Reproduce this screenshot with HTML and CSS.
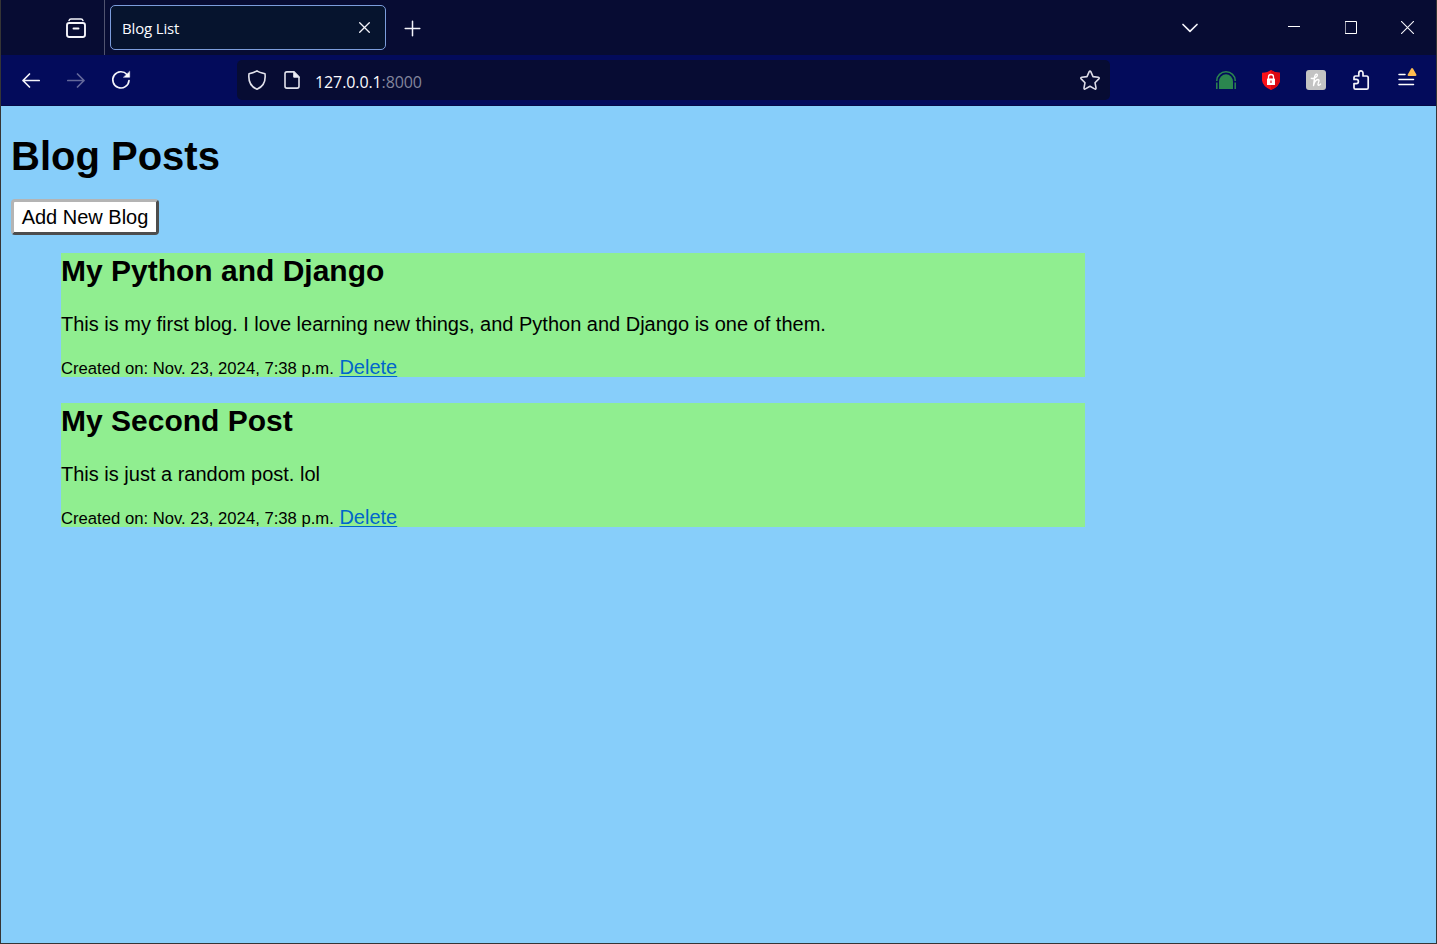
FILE: index.html
```html
<!DOCTYPE html>
<html lang="en">
<head>
<meta charset="utf-8">
<title>Blog List</title>
<link rel="stylesheet" href="styles.css">
</head>
<body>
<div class="window">
  <header class="tabs">
    <svg class="archive line" width="22" height="22" viewBox="0 0 22 22" stroke-width="1.900"><path d="M4 3.600Q4.500 2 6 2H16Q17.500 2 18 3.600" stroke-width="1.500"/><rect x="2" y="6" width="18" height="14" rx="2.200"/><path d="M8.500 11.500H13.500"/></svg>
    <span class="divider"></span>
    <div class="tab">
      <span class="tab-title">Blog List</span>
      <svg class="line" width="11" height="11" viewBox="0 0 11 11" stroke-width="1.300"><path d="M.7.7 10.300 10.300M10.300.7.7 10.300"/></svg>
    </div>
    <svg class="new-tab line" width="17" height="17" viewBox="0 0 17 17" stroke-width="1.500"><path d="M8.500 1.200V15.800M1.200 8.500H15.800"/></svg>
    <svg class="chevron line" width="18" height="10" viewBox="0 0 18 10" stroke-width="1.700"><path d="M2 1.500 9 8.300 16 1.500"/></svg>
    <svg class="minimize" width="12" height="1" viewBox="0 0 12 1"><path fill="#fff" d="M0 0H12V1H0z"/></svg>
    <svg class="maximize line" width="12" height="13" viewBox="0 0 12 13" stroke-width="1"><path d="M.5.5H11.500V12.500H.5z"/></svg>
    <svg class="close line" width="13" height="13" viewBox="0 0 13 13" stroke-width="1.100"><path d="M.4.4 12.600 12.600M12.600.4.4 12.600"/></svg>
  </header>
  <nav class="toolbar">
    <svg class="back line" width="20" height="18" viewBox="0 0 20 18" stroke-width="1.700"><path d="M18.200 9.500H2M8.500 3 2 9.500 8.500 16"/></svg>
    <svg class="forward line" width="20" height="18" viewBox="0 0 20 18" stroke-width="1.700"><path d="M1.800 9.500H18M11.500 3 18 9.500 11.500 16"/></svg>
    <svg class="reload line" width="20" height="20" viewBox="0 0 20 20" stroke-width="1.700"><path d="M18 10.500A8.100 8.100 0 1 1 16 4.500"/><path d="M18.700 1.500V7.300H12.700z" fill="#fff" stroke-width=".5"/></svg>
    <div class="address">
      <svg class="shield line" width="20" height="22" viewBox="0 0 20 22" stroke-width="1.600"><path d="M10 1.800Q12 3.200 18 4.800C18.800 11.500 16.500 17.500 10 20.200 3.500 17.500 1.200 11.500 2 4.800Q8 3.200 10 1.800z"/></svg>
      <svg class="page line" width="18" height="20" viewBox="0 0 18 20" stroke-width="1.600"><path d="M11 1.900H3.800Q2 1.900 2 3.700V16.300Q2 18.100 3.800 18.100H14.200Q16 18.100 16 16.300V7z"/><path d="M10.700 2V7.200H16z" fill="#f0f0f8" stroke-width="1"/></svg>
      <span class="url">127.0.0.1<span class="port">:8000</span></span>
      <svg class="star line" width="22" height="22" viewBox="0 0 22 22" stroke-width="1.600"><path d="M10.200 2.700Q11 1.400 11.800 2.700L14 7.600 19.300 8.300Q20.900 8.700 19.800 9.900L16 13.700 17 18.900Q17 20.600 15.600 19.900L11 17.300 6.400 19.900Q5 20.600 5 18.900L6 13.700 2.200 9.900Q1.100 8.700 2.700 8.300L8 7.600z"/></svg>
    </div>
    <svg class="arch" width="20" height="18" viewBox="0 0 20 18"><path d="M.8 10V9.500A9.200 8.700 0 0 1 19.200 9.500V10M.8 11.500V18M19.200 11.500V18" fill="none" stroke="#2b864f" stroke-width="1.500"/><path d="M3 18V10.500A7 7.200 0 0 1 17 10.500V18z" fill="#2b864f"/></svg>
    <svg class="blocker" width="18" height="20" viewBox="0 0 18 20"><path d="M9 0Q12 2.500 18 2.700V10.500Q17.200 16.500 9 20 .8 16.500 0 10.500V2.700Q6 2.500 9 0z" fill="#fa1018"/><path d="M9 0Q12 2.500 18 2.700V10.500Q17.200 16.500 9 20z" fill="#dc0710"/><rect x="5" y="8.500" width="8" height="6.500" rx=".6" fill="#fff"/><path d="M6.500 9V7a2.500 2.500 0 0 1 5 0V9" fill="none" stroke="#fff" stroke-width="1.300"/><path d="M9 10.500V13" stroke="#e3343c" stroke-width="1.300"/></svg>
    <svg class="honey" width="20" height="20" viewBox="0 0 20 20"><rect width="20" height="20" rx="3" fill="#c3c3c3"/><path d="M5.300 8.300C8 9 11.500 7 11.400 5 11.200 3.400 9.300 4 8.700 6.300L7.500 15.500C8.300 12 10 9.600 12 9.500 14.500 9.600 11.600 13.200 12 14.800 12.400 15.800 13.800 15.200 14.600 14" fill="none" stroke="#fff" stroke-width="1.350" stroke-linecap="round" stroke-linejoin="round"/></svg>
    <svg class="puzzle line" width="18" height="22" viewBox="0 0 18 22" stroke-width="1.700"><path d="M2 9.500V8.500Q2 7 3.500 7H6.800V4.200a2.100 2.400 0 0 1 4.200 0V7H14.500Q16.200 7 16.200 8.700V18.700Q16.200 20.200 14.700 20.200H3.500Q2 20.200 2 18.700V14.600H4.300a2.100 2.100 0 0 0 0-4.200H2z"/></svg>
    <svg class="menu" width="20" height="20" viewBox="0 0 20 20"><path d="M1 7.500H7M1 12.500H15.500M1 17.500H15.500" stroke="#fff" stroke-width="1.500" stroke-linecap="round"/><path d="M14.100 2 17.500 8H10.600z" fill="#ffbd4f" stroke="#ffbd4f" stroke-width="2" stroke-linejoin="round"/></svg>
  </nav>
  <main class="content">
    <h1>Blog Posts</h1>
    <button class="add">Add New Blog</button>
    <ul class="posts">
      <li class="post">
        <h2>My Python and Django</h2>
        <p>This is my first blog. I love learning new things, and Python and Django is one of them.</p>
        <small>Created on: Nov. 23, 2024, 7:38 p.m.</small>
        <a href="#">Delete</a>
      </li>
      <li class="post">
        <h2>My Second Post</h2>
        <p>This is just a random post. lol</p>
        <small>Created on: Nov. 23, 2024, 7:38 p.m.</small>
        <a href="#">Delete</a>
      </li>
    </ul>
  </main>
</div>
</body>
</html>
```

FILE: styles.css
```css
* { box-sizing: border-box; }
body { margin: 0; }
svg { display: block; flex: none; }
.line { fill: none; stroke: #f4f4fa; stroke-linecap: round; stroke-linejoin: round; }
.window {
  height: 944px;
  display: flex;
  flex-direction: column;
  border: solid #353535;
  border-width: 0 1px 1px;
  background: #87cefa;
  overflow: hidden;
}
.tabs, .toolbar {
  display: flex;
  align-items: center;
  flex: none;
  font-family: "Open Sans", "Noto Sans", sans-serif;
}
.tabs { height: 55px; background: #070c33; }
.archive { margin-left: 64px; }
.divider { width: 1px; height: 55px; margin-left: 17px; background: #50536f; }
.tab {
  width: 276px;
  height: 45px;
  margin-left: 5px;
  padding: 0 15px 0 11px;
  display: flex;
  align-items: center;
  justify-content: space-between;
  border: 1px solid #7b9ddc;
  border-radius: 5px;
  background: #06142e;
}
.tab-title { color: #fbfbfe; font-size: 15px; letter-spacing: -.15px; }
.new-tab { margin: 2px 0 0 18px; }
.chevron { margin-left: auto; }
.minimize { margin: 0 0 2px 89px; }
.maximize { margin-left: 45px; stroke-linejoin: miter; stroke: #fff; }
.close { margin: 0 22px 0 44px; }
.toolbar { height: 51px; background: #030b5b; border-bottom: 1px solid #050a45; }
.back { margin-left: 20px; }
.forward { margin-left: 25px; opacity: .4; }
.reload { margin-left: 25px; }
.address {
  width: 873px;
  height: 40px;
  margin-left: 106px;
  padding: 0 9px 0 10px;
  display: flex;
  align-items: center;
  background: #070c33;
  border-radius: 5px;
}
.shield { stroke: #e2e2ec; }
.page { margin-left: 16px; stroke: #e2e2ec; }
.url { margin-left: 14px; padding-top: 3px; color: #fbfbfe; font-size: 16px; letter-spacing: -.1px; }
.port { color: #82859b; }
.star { margin-left: auto; stroke: #dcdce8; }
.arch { margin-left: 106px; }
.blocker { margin-left: 26px; }
.honey { margin-left: 26px; }
.puzzle { margin-left: 26px; }
.menu { margin: 0 0 6px 28px; }
.content {
  flex: 1;
  padding: 27px 10px 0;
  font: 20px/23px "Liberation Sans", Arial, sans-serif;
  color: #000;
}
h1 { margin: 0 0 20px; font-size: 40px; line-height: 46px; }
.add {
  display: block;
  width: 148px;
  height: 36px;
  padding: 0;
  border: 3px solid;
  border-color: #b4b4b4 #4d4d4d #4d4d4d #b4b4b4;
  border-radius: 4px;
  background: #fff;
  color: #000;
  font: inherit;
}
.posts {
  list-style: none;
  margin: 18px 0 0;
  padding: 0 0 0 50px;
  display: flex;
  flex-direction: column;
  gap: 26px;
}
.post { width: 1024px; height: 124px; background: #90ee90; }
.post h2 { margin: 0; font-size: 30px; line-height: 35px; }
.post p { margin: 25px 0 20px; }
.post small { font-size: 16.667px; }
.post a { color: #0066cc; text-decoration: underline; text-underline-offset: 2px; text-decoration-thickness: 1px; }
```
